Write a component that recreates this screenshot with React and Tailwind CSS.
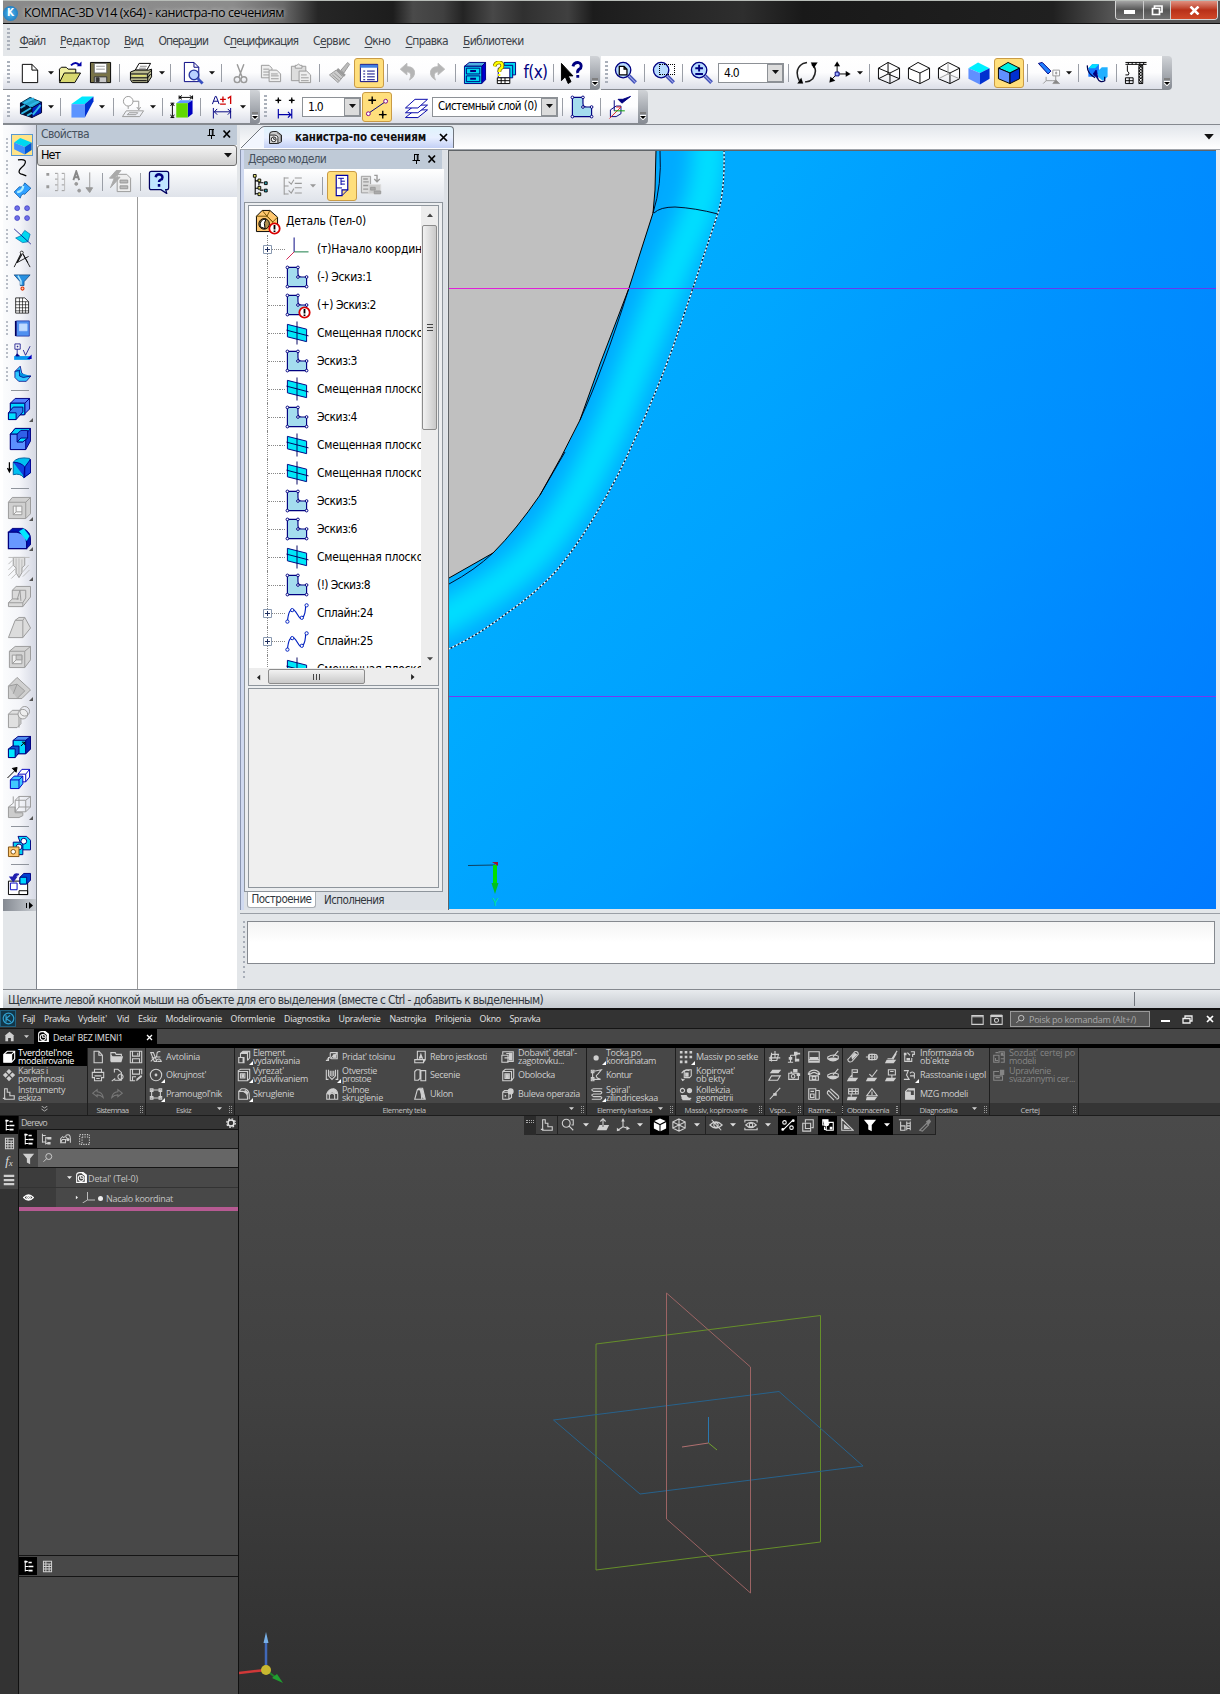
import React, { useLayoutEffect, useRef, useState } from "react";

/* ---------- helpers ---------- */

function T({ w, className = "", children }) {
  const ref = useRef(null);
  const [ls, setLs] = useState(null);
  useLayoutEffect(() => {
    if (!w || ls !== null) return;
    const el = ref.current;
    const n = el.textContent.length;
    setLs((w - el.getBoundingClientRect().width) / n);
  }, [w, ls]);
  return (
    <span ref={ref} className={"inline-block shrink-0 whitespace-nowrap " + className} style={ls === null ? undefined : { letterSpacing: ls + "px" }}>
      {children}
    </span>
  );
}

function Strip({ x0 = 0, items, className = "" }) {
  let p = x0;
  return (
    <div className={"flex " + className}>
      {items.map(([x, w, n], i) => {
        const m = x - p;
        p = x + w;
        return (
          <div key={i} className="flex h-full shrink-0 items-center justify-center" style={{ marginLeft: m, width: w }}>
            {n}
          </div>
        );
      })}
    </div>
  );
}

const N = "#000080";
const B = "#0000a8";
const G = "#9a9a9a";
const circ = (x, y, r) => `M${x - r} ${y}a${r} ${r} 0 1 0 ${2 * r} 0a${r} ${r} 0 1 0 ${-2 * r} 0z`;

/* each icon is a list of [path, stroke, fill, stroke width] */
const ICONS = {
  new: [["M4 3H14L20 9V22H4z", "#000", "#fff"], ["M14 3V9H20", "#000", "none"]],
  open: [["M1 21V8L3 6H8L10 8H18V12", "#000", "#f0f0a0"], ["M1 22L6 12H23L17 22z", "#000", "#d8d870"], ["M13 4Q18 -1 22 4", B, "none", 2], ["M19 5H24V0z", B, B, 0]],
  save: [["M1 1H22V22H1z", "#000", "#7a7448"], ["M5 2H18V12H5z", "#666", "#fff"], ["M7 5H16M7 8H16", "#999", "none"], ["M5 16H18V22H5z", "#333", "#c8c8c8"], ["M7 17H10V21H7z", "#333", "#333"]],
  print: [["M6 9L10 2H22L18 9z", "#000", "#fff"], ["M11 5H18M10 7H17", "#888", "none"], ["M1 11L6 9H20L23 8V16L19 22H3L1 19z", "#000", "#b8b890"], ["M1 13H19L23 9M1 17H19L22 13M3 20H18M19 13V22", "#000", "none"], ["M3 15H17", "#ffff60", "none"]],
  preview: [["M3 1H13L18 6V21H3z", N, "#fff"], ["M13 1V6H18", N, "none"], [circ(13, 14, 5), "#2838a0", "#b8d0ff", 1.4], ["M17 18L22 23", "#3850c0", "none", 3]],
  cut: [["M8 3L13 16M15 3L10 16", G, "none", 1.5], [circ(8, 19, 3), G, "none", 1.5], [circ(15, 19, 3), G, "none", 1.5]],
  copy: [["M2 4H10L13 7V17H2z", G, "#eee"], ["M4 8H10M4 11H10M4 14H10", G, "none"], ["M10 9H18L22 13V21H10z", G, "#eee"], ["M12 13H19M12 15H20M12 18H20", G, "none"]],
  paste: [["M2 5H17V20H2z", G, "#ddd"], ["M6 7V4H8Q9 1 11 4H13V7z", G, "#eee"], ["M10 10H18L22 14V22H10z", G, "#eee"], ["M12 14H18M12 17H20M12 20H20", G, "none"]],
  brush: [["M13 9L20 1L22 3L16 12z", G, "#bbb"], ["M9 8L17 15", G, "none", 3], ["M8 9L1 14L10 22L15 16z", G, "#ccc"], ["M4 14L11 20M6 12L13 18", G, "none"]],
  list: [["M3 3H21V21H3z", N, "#fff"], ["M3 5H21", "#4080e0", "none", 3], ["M6 10H8M6 13H8M6 16H8M10 10H18M10 13H18M10 16H18M6 19H8M10 19H18", N, "none"]],
  undo: [["M1 8L9 1V5Q19 5 18 14Q17 18 12 21Q16 12 9 11V15z", "#bbb", "#b5b5b5"]],
  redo: [["M23 8L15 1V5Q5 5 6 14Q7 18 12 21Q8 12 15 11V15z", "#bbb", "#b5b5b5"]],
  cabinet: [["M1 5L6 1H23L19 5z", N, "#50b0e0"], ["M19 5L23 1V19L19 23z", N, "#0000d0"], ["M1 5H19V23H1z", N, "#00d8f0"], ["M3 7H17V13H3zM3 15H17V21H3z", N, "none"], ["M7 10H13M7 18H13", N, "none", 2]],
  qsq: [["M11 1H23V14H11z", N, "#00d8f0"], ["M8 4H20V17H8z", N, "#00d8f0"], ["M5 7H17V17H5z", N, "#fff"], ["M4 17H17V23H4zM4 20H17M8 17V23M12 17V23", "#000", "#fff"], ["M1 5Q2 1 6 1T9 6Q6 8 6 11", "#807000", "none", 4], ["M1 5Q2 1 6 1T9 6Q6 8 6 11M6 13V15", "#ffff00", "none", 2.4]],
  curhelp: [["M1 2V20L5 16L8 23L11 21L8 15H13z", "#000", "#000"], ["M13 5Q14 1 18 1Q23 2 21 7Q17 9 18 12M18 14V17", N, "none", 3]],
  zpage: [[circ(9, 9, 8), N, "#b8dcff", 1.4], ["M5 5H10L13 8V14H5zM10 5V8H13", "#000", "#fff", 1.3], ["M15 15L22 22", "#4050b8", "none", 4], ["M15 15L22 22", "#a0a8e8", "none", 1.2]],
  zsel: [[circ(9, 9, 8), N, "#b8dcff", 1.4], ["M15 15L22 22", "#4050b8", "none", 4], ["M15 15L22 22", "#a0a8e8", "none", 1.2]],
  zpm: [[circ(9, 9, 8), N, "#b8dcff", 1.4], ["M9 3.500V10.500M5 7H13M5 13H13", N, "none", 2], ["M15 15L22 22", "#4050b8", "none", 4], ["M15 15L22 22", "#a0a8e8", "none", 1.2]],
  rot: [["M8 2Q-2 8 4 20M10 21Q14 22 18 18Q24 8 17 3M8 2L12 1", "#222", "none", 1.6], ["M16 1H23L19 7zM2 23H8L6 17z", "#000", "#000", 0.1]],
  axes: [["M9 13V3M9 13H20M9 13L2 20", "#000", "none"], ["M6 5L9 0L12 5zM18 10L23 13L18 16zM1 22L2 16L7 20z", "#000", "#000", 0.1], ["M7 11H11V15H7z", N, "#a0b0ff"]],
  cube1: [["M1 7L11 1L23 7V18L13 23L1 18zM1 7L13 12L23 7M13 12V23M11 1V13M1 18L11 13L23 18", "#000", "none"]],
  cube2: [["M1 7L11 1L23 7V18L13 23L1 18zM1 7L13 12L23 7M13 12V23", "#000", "#fff"]],
  cube3: [["M1 7L11 1L23 7V18L13 23L1 18zM1 7L13 12L23 7M13 12V23", "#000", "none"], ["M11 1V13M1 18L11 13L23 18", G, "none"]],
  cube4: [["M1 7L11 1L23 7L13 12z", "none", "#00f0ff"], ["M1 7L13 12V24L1 18z", "none", "#6090ff"], ["M13 12L23 7V18L13 24z", "none", "#0030d0"]],
  slab: [["M1 8L9 2L24 8L15 14z", "none", "#00d8f0"], ["M1 8L15 14V24L1 17z", "none", "#4090ff"], ["M15 14L24 8V18L15 24z", "none", "#0058d8"]],
  cube5: [["M1 7L11 1L23 7L13 12z", "#000", "#00f0e0"], ["M1 7L13 12V23L1 18z", "#000", "#6090ff"], ["M13 12L23 7V18L13 23z", "#000", "#0030d0"]],
  cam: [["M1 2L5 1L14 10L11 13z", N, "#2080ff"], ["M16 9H23V15H16zM19 11H20V13H19zM19 15V20M9 16V20H16L19 20M9 20L6 23", G, "none"], ["M16 23L19 19L23 23z", G, "#888"]],
  pair: [["M2 7L6 3H13V12L9 16H2z", "none", "#1878ff"], ["M12 10L16 6H22V16L17 20L12 16z", "none", "#20b0ff"], ["M2 7L6 3H13L9 7z", "none", "#00e0ff"], ["M1 4Q0 12 9 17M11 17Q14 23 19 20V16", "#000050", "none", 1.3], ["M7 13L12 18L10 9z", "#000080", "#000080"]],
  crane: [["M1 1H23M1 3H23M4 1V3M8 1V3M12 1V3M16 1V3M20 1V3M3 4V10Q6 12 4 14H1M1 17H9V23H1zM5 17V23M1 20H9", "#000", "none"], ["M15 4H19V23H15z", "#000", "#fff"], ["M15 4L19 7L15 10L19 13L15 16L19 19L15 23M19 4L15 7L19 10L15 13L19 16L15 19L19 23", "#000", "none"]],
  stripe: [["M1 8L11 2L23 7L13 13z", "#003050", "#20a0c8"], ["M1 8L13 13V23L1 19z", "#000030", "#001830"], ["M13 13L23 7V18L13 23z", "#000030", "#0020c0"], ["M1 13L6 10M2 19L12 13M8 21L13 18M5 8L15 3M10 11L20 6M14 20L22 10", "#30b8e8", "none", 2]],
  solid: [["M1 9L12 1H24L15 9z", "none", "#00e8ff"], ["M1 9H15V23H1z", "none", "#5c94ff"], ["M15 9L24 1V6L15 23z", "none", "#0030d0"]],
  extr: [[circ(7, 6, 5), G, "none"], ["M12 6H18V14M16 12L18 15L20 12M7 11V14M5 16H23L19 22H1zM8 18H17L15 20H6z", G, "none"]],
  green: [["M6 8L10 5H23L18 8z", "none", "#6098ff"], ["M18 8L23 5V19L18 23z", "none", "#0000c0"], ["M6 8H18V23H6z", "none", "#60d800"], ["M2 9V22M0 8H4M0 23H4M0 11L2 8L4 11M0 20L2 23L4 20M9 2H22M9 0V4M23 0V4M12 0L9 2L12 4M20 0L23 2L20 4", "#000", "none"]],
  apm: [["M2 9L5 1H6L9 9M3 6H8M3 13V24M21 13V24M4 17H21M7 14L4 17L7 20M18 14L21 17L18 20", N, "none"], ["M10 4H16M13 1V7M10 9H16M18 3L21 1V9", "#d00000", "none", 1.4]],
  stars: [["M4 2V8M1 5H7M18 2V8M15 5H21M3 4L5 6M5 4L3 6M17 4L19 6M19 4L17 6", "#000", "none", 1.3], ["M4 14V24M18 14V24M4 20H17M14 17L17 20L14 23", B, "none", 1.2]],
  snap: [["M4 18L20 7", N, "none"], [circ(3, 19, 2), "#800080", "#fff"], [circ(21, 6, 2), "#800080", "#fff"], ["M7 1V9M3 5H11M18 16V24M14 20H22M6 4L8 6M8 4L6 6M17 19L19 21M19 19L17 21", "#000", "none", 1.4]],
  layers: [["M1 23L11 15H24L14 23z", B, "#fff"], ["M1 18L11 10H24L14 18z", B, "#fff"], ["M1 13L11 4H24L14 13z", B, "#fff"]],
  sketch: [["M2 2H13V8Q13 12 17 12H22V22H2z", N, "#a4dcee", 1.2], [circ(2, 2, 1.4), N, "#fff"], [circ(13, 2, 1.4), N, "#fff"], [circ(13, 12, 1.4), N, "#fff"], [circ(22, 12, 1.4), N, "#fff"], [circ(2, 22, 1.4), N, "#fff"], [circ(22, 22, 1.4), N, "#fff"]],
  acheck: [["M2 15L8 11H13V19L8 22H2z", N, "none"], ["M1 24L13 12H8", "#e02020", "none"], ["M6 16H17", "#00a000", "none"], ["M6 5V16", N, "none"], ["M10 4L14 8L23 1L15 4z", N, N]],
  plane: [["M2 3L22 8V21L2 16z", N, "#00e8f8"], ["M1 9L24 15M12 0V24", "#000060", "none"]],
  spline: [["M2 21C3 11 5 7 9 9C13 12 14 20 18 17Q21 13 21 4", "#0020c0", "none", 1.2], [circ(2, 21, 1.7), "#0020c0", "#fff"], [circ(7, 9, 1.7), "#0020c0", "#fff"], [circ(17, 17, 1.7), "#0020c0", "#fff"], [circ(22, 4, 1.7), "#0020c0", "#fff"]],
  origin: [["M9 15V0", "#000080", "none"], ["M9 15H24", "#107840", "none"], ["M9 15L1 23", "#d02050", "none"]],
  detail: [["M1 7L7 1H15L23 8V18L18 23H1z", "#000", "#ffc870"], ["M1 7H12L18 13V23M7 1L12 7L15 1M12 7L18 13L23 8", "#705000", "none"], [circ(9, 15, 5.5), "#000", "#b09050"], ["M5 18Q4 10 11 10Q8 14 10 20z", "#000", "#fff"]],
  tree: [["M3 3V22M3 7H7M7 8V12M7 9H12M3 15H7M3 21H7M8 17H12", "#000", "none", 1.2], ["M1 0H4V3H1zM6 5H9V8H6zM6 13H9V16H6zM6 20H9V23H6z", "#000", "#e8e870"], ["M13 8H16V11H13zM13 16H16V19H13z", "#000", "#30a0b0"]],
  checks: [["M2 2V22M2 3H7M2 12H7M2 21H7M14 3H22M14 9H22M14 14H22M14 20H22M7 7L10 10L13 5M7 17L10 20L13 15", G, "none", 1.2]],
  page: [["M6 1H18V16H12V22H6z", B, "#fff", 1.2], ["M12 22L18 16", B, "none"], ["M8 4H11V11M11 7H15M11 10H15M11 4H14M6 14H12", B, "none"]],
  pages: [["M1 2H11V20H1z", G, "#ddd"], ["M3 5H8M3 8H9M3 12H9M3 16H9M15 1H18V7M15 5L18 8L21 5", G, "none", 1.5], ["M9 11H22V21H9z", "#ddd", "#ccc"], ["M11 14H16V17H11zM15 18H22V21H15z", G, "#aaa"]],
  cat: [["M3 4H6M3 17H6", G, "none", 3], ["M12 3H15M12 9H15M12 15H15M12 21H15M19 3H22M19 9H22M19 15H22M19 21H22", G, "none", 1], ["M15 3V21M22 3V21", "#bbb", "none", 1]],
  az: [["M2 10L5 1L8 10M3 7H8", "#888", "none", 2], ["M19 2V22M15 18L19 23L22 18z", "#999", "#999"], [circ(5, 14, 1.5), G, G], [circ(8, 21, 1.5), G, G]],
  bolt: [["M8 4H18L22 8V22H8z", "#999", "#eee"], ["M11 10H19V13H11zM11 16H19V19H11z", "#999", "#bbb"], ["M7 0L0 8H5L1 18L11 7H6L12 0z", "#aaa", "#aaa"]],
  help: [["M3 1H19Q21 1 21 3V18Q21 20 19 20H18L19 24L13 20H3Q1 20 1 18V3Q1 1 3 1z", "#000060", "#c0e4ff", 1.3], ["M7.500 7Q8 4 11 4Q16 5 14 9Q11 10 11 12M11 14V17", N, "none", 2.6]],
  docpart: [["M2 7Q2 2 8 2H14L22 8V19L16 22H2z", "#111", "#ccc", 1.5], ["M2 8H11Q17 9 16 14V22", "#111", "#eee", 1.5], [circ(9, 15, 4), "#111", "#fff", 1.5], ["M9 12V15H12", "#111", "none", 1.5], ["M14 4L20 8V18", "#555", "none"]],
  curve: [["M6 2Q20 0 14 9Q2 19 12 21L17 23", "#000", "none", 1.6]],
  surf: [["M1 14L8 7Q12 9 15 2L23 9L15 17Q11 15 9 22z", "#0050a0", "#30a0ff"], ["M5 14Q12 14 13 6", "#b0f0ff", "none", 3]],
  dots: [[circ(5, 5, 3.2), "#3838c0", "#7070e8"], [circ(18, 5, 3.2), "#3838c0", "#7070e8"], [circ(5, 18, 3.2), "#3838c0", "#7070e8"], [circ(18, 18, 3.2), "#3838c0", "#7070e8"]],
  wing: [["M3 14L10 11L15 4L22 9L19 19L12 20z", "#0070b0", "#00d8f0"], ["M1 2L23 22", N, "none"]],
  compass: [["M10 4L1 22M11 4L5 16L20 8M12 4L22 22M11 6L5 16M13 5L19 16", "#000", "none", 1.1], [circ(11, 3, 2), "#000", "#fff"]],
  funnel: [["M1 2H22L14 11V16H9V11z", "#104880", "#2890e0"], ["M6 3L10 10V15", "#b0e8ff", "none", 2], [circ(12, 20, 2), "#e03000", "#ffd0b0", 1.4]],
  grid: [["M3 2H15L20 7V22H3z", "#000", "#fff"], ["M3 7H20M3 11H20M3 15H20M3 19H20M8 2V22M12 2V22M16 7V22", "#000", "none", 0.8]],
  book: [["M4 2H21V22H4z", "#2030a0", "#5090f0"], ["M8 6H18V15H8z", "#c0d8ff", "#c0dcff"], ["M3 2V22", "#000060", "none", 2]],
  rough: [["M2 2H9V9H2zM5 5H6V6H5zM5 9V17M13 10L16 17L22 5", N, "none"], ["M1 18H22V23H1z", "none", "#0898f0"], ["M3 18L5 15L8 18z", N, N], ["M18 22L24 16V22z", "none", "#0000c0"]],
  elbow: [["M2 8L9 1L11 10L16 14H23L17 21H7L2 16z", N, "#30c8ff"], ["M2 8L8 6V14L13 16L23 14", N, "#0090e0"]],
  boss: [["M3 6L8 1H23V12L17 18H3z", N, "#5080ff"], ["M3 6H18L23 1M18 6V18", N, "none"], ["M3 6H18V18H3z", N, "#00d8ff"], ["M1 16L6 10H16V15L9 23H1z", N, "#3080f0"], ["M1 16H9V23H1z", N, "#00e0ff"]],
  cutx: [["M3 7L8 1H24V14L19 23H3z", N, "#1838d8"], ["M3 7L8 1H24L19 7z", N, "#00d0f8"], ["M3 7H19V23H3z", N, "#5c90ff"], ["M10 7L14 3H21V11L16 15H10z", N, "#3060e8"], ["M10 15L14 11H21L16 15z", N, "#00e0ff"]],
  sweep: [["M6 6Q10 0 23 2L24 17L17 22Q13 17 6 19z", "#0060a0", "#00c0f0"], ["M6 6Q14 6 18 11V22M18 11L24 3V17L17 22z", "#000090", "#1040e0"], ["M2 6V15M0 12L2 16L4 12", "#000", "none", 1.3]],
  frame: [["M1 6L5 1H24V18L19 23H1z", G, "#d0d0d0"], ["M1 6H19V23M19 6L24 1", G, "none"], ["M6 10H15V19H6z", G, "#f6f6f6"], ["M6 19L9 16V10M9 16H15", G, "none"]],
  fillet: [["M1 6L5 2H16Q24 5 24 13V19L20 23H1z", N, "#0010b0"], ["M1 6H10Q20 8 20 17V23H1z", N, "#6898ff", 1.3], ["M12 5L17 2L23 10L20 15z", "none", "#00e8ff"]],
  hole: [["M6 1H18V9L15 12V17L12 22L9 17V12L6 9z", G, "#e0e0e0"], ["M1 1H23M9 2V18M12 2V20M15 3V17M1 8L5 4M1 14L7 8M1 20L8 13M4 23L9 18M16 21L23 14M16 16L22 9", "#bbb", "none"]],
  rib: [["M5 5L9 1H24V12L16 22H1V18L5 14z", G, "#dadada"], ["M1 18H16V22M5 5H19V13L16 18M10 15L13 5L14 16M5 14H12", G, "none"]],
  draft: [["M1 22L8 4L12 1H18L24 12L16 22z", G, "#dcdcdc"], ["M8 4H16L16 22M16 4L18 1", G, "none"]],
  shell: [["M2 6L8 1H24V15L18 23H2z", G, "#d4d4d4"], ["M2 6H18V23M18 6L24 1", G, "none"], ["M5 10H15V19H5z", G, "#eee"], ["M5 19L9 15H15V10H9V15", G, "#c8c8c8"]],
  sect: [["M1 10L10 1L24 14L15 23H1z", G, "#d0d0d0"], ["M1 10L10 8L18 15L10 23M6 18L10 8", G, "#c0c0c0"]],
  bool: [["M1 8L5 4H14V18L10 22H1zM1 8H12V22", G, "#e0e0e0"], [circ(16, 8, 5), G, "#eee"], [circ(18, 5, 5), G, "none"]],
  scale: [["M6 5L11 1H24V14L19 19H6z", N, "#5090f0"], ["M6 5H19V19H6z", N, "#00d8ff"], ["M19 5L24 1V14L19 19z", N, "#0020b0"], ["M1 14L5 11H12V18L8 23H1z", N, "#1050d0"], ["M1 14H8V23H1z", N, "#00e8ff"], ["M14 11L18 7M15 7H18V10", "#000", "none"]],
  copyb: [["M11 8L15 3H23V11L19 16H11zM11 8H19V16M19 8L23 3", "#0000c0", "#fff"], ["M3 14L7 10H16V18L12 23H3z", "#0000c0", "#40c8ff"], ["M3 14H12V23M12 14L16 10", "#0000c0", "none"], ["M0 12L9 3M5 2L10 1L9 6z", "#000", "#000"]],
  inter: [["M1 12L6 8V1", G, "none"], ["M1 12H8V18H16V21L12 23H1z", G, "#ccc"], ["M8 5L12 1H24V12L19 17H8zM8 5H19V17M19 5L24 1M12 1V12H24M8 17L12 12", G, "none"]],
  coll: [["M11 2H20L24 6V16H16z", N, "#00e0ff"], ["M6 8H16V21H6z", N, "#00d0f0"], [circ(17, 7, 3), N, "#fff"], [circ(12, 13, 3), N, "#fff"], ["M1 13H12V23H1z", "#805010", "#ffc870"], [circ(6, 18, 2.4), "#805010", "#fff"]],
  draw: [["M1 9H21V23H1zM12 19H21V23H12z", "#000", "#fff"], ["M3 11H10V18H3z", "#0000c0", "none"], ["M13 5L17 1H24V8L20 12H13z", N, "#0040d0"], ["M13 5H20V12H13z", N, "#00d8ff"], ["M12 2Q6 0 6 7M3 5L6 9L9 5z", "#2020b0", "#2020b0", 1.6]],
};

const Ico = ({ n, s = 24 }) => (
  <svg width={s} height={s} viewBox="-0.5 -0.5 25 25" className="shrink-0">
    {ICONS[n].map(([d, st, f, sw = 1], i) => (
      <path key={i} d={d} stroke={st} fill={f} strokeWidth={sw} />
    ))}
  </svg>
);

/* monochrome icons on a 16 unit grid: [outline path, filled path] */
const D = {
  cubeS: ["M2 5L6 1.5H14.5V10L11 14H2zM2 5H11V14M11 5L14.5 1.5", "M2 5H11V14H2z"],
  diam: ["", "M8 1L11 4L8 7L5 4zM4 5L7 8L4 11L1 8zM12 5L15 8L12 11L9 8zM8 9L11 12L8 15L5 12z"],
  skt: ["M3 2V14H14V10H9V6H6V2zM1 13H4", ""],
  newd: ["M3.5 1.5H9L13 6V14.5H3.5zM9 1.5V6H13", ""],
  opend: ["M1 13V3H6L7 5H13V7", "M3 7H15L13 14H1V5z"],
  saved: ["M1.5 1.5H14.5V14.5H1.5zM4 2V7H12V2M4 14V10H12V14M10 3V6", ""],
  printd: ["M4 5V1.5H12V5M1.5 5H14.5V11H12V14.5H4V11H1.5zM4 9H12M6 12H10", ""],
  prevd: ["M5 14H13V5L9 1.5H5V5M9 10A3 3 0 1 0 9 9.9M6 12L2 15", ""],
  savep: ["M14.5 7V1.5H1.5V14.5H7M4 2V7H12V2M4 14V10H8M9 14L14 9", "M8 15L9 12L14 8L15 10z"],
  undod: ["M2 7L7 3V5.5Q13 6 14 12Q11 9 7 9V11z", ""],
  redod: ["M14 7L9 3V5.5Q3 6 2 12Q5 9 9 9V11z", ""],
  auto: ["M2 3H5L9 13H6zM3 9H6Q9 9 9 5T13 2M9 8H13M9 11Q13 9 14 13H10M2 13L6 9", ""],
  circle: [circ(8, 8, 6.5), circ(8, 8, 1.6)],
  rect: ["M3 3.5H13V12.5H3zM1.5 2H4.5V5H1.5zM11.5 2H14.5V5H11.5zM1.5 11H4.5V14H1.5zM11.5 11H14.5V14H11.5z", ""],
  ext: ["M4 4L7 1.5H14.5V9L12 12M4 8V4H12V12M2 8.5H8V14.5H2zM7 8V14", "M4 4L7 1.5H14L12 4z"],
  cutd: ["M1.5 3L4 1.5H14.5V12L12 14.5H1.5zM1.5 4H12V14M4 6.5H9V11.5H4z", "M5 7H8V11H5z"],
  fil: ["M2 5L5 2H9Q14 4 14 9V14M2 5H7Q12 6 12 12V14H2z", "M9 3L13 6L12 9L8 6z"],
  thick: ["M6 3H14V10H7M2 11L6 8V3M1 12H4V8M6 10Q10 5 14 4", "M9 5H13V9H9z"],
  hold: ["M1.5 2V13H4M14.5 2V13H12M4 2V9L8 13L12 9V2M6 3V9M8 3V10M10 3V9", ""],
  full: ["M2 14V8Q4 2 10 2Q14 3 14.5 8V14zM5 14V9Q8 5 11 9V14", "M2 8Q4 2 10 2Q14 3 14 8H11Q8 4 5 9z"],
  ribd: ["M5 1.5H14V11H5zM2 11H12V14.5H2zM9 4V10M7 10L9 5L11 10M14 11L12 14", ""],
  sec: ["M2 4L4 2H8V12L6 14H2zM9 3H14.5V14.5H9z", ""],
  ukl: ["M2 14L5 3L7 1.5H11L14 14zM5 3H9L10 14", "M7 2H11L14 14L11 13z"],
  addd: ["M2 5V2H14V13H7M1 6H8V14H1zM4 9H12V4H6", "M9 3H13V12H9z"],
  shelld: ["M2 4L5 1.5H14.5V11L12 14.5H2zM2 4H12V14M4.5 6.5H9.5V12H4.5z", "M5 7H9V11.5H5z"],
  boold: ["M2 6H9V14H2zM2 6L4 4H8M12 8V12L9 14", circ(11, 5, 3.5) + circ(5, 10, 1)],
  dot: ["", circ(7, 9, 3)],
  kont: ["M3 4L13 2L9 7Q4 10 12 13H3zM1.5 2.5H4.5V5.5H1.5zM1.5 11H4.5V14.5H1.5z", ""],
  spir: ["M14 2H4Q0 3 4 5H12Q15 6 12 8H4Q0 9 4 11H12Q15 12 12 14H2", ""],
  grd: ["", "M1 1H4V4H1zM6.5 1H9.5V4H6.5zM12 1H15V4H12zM1 6.5H4V9.5H1zM6.5 6.5H9.5V9.5H6.5zM12 6.5H15V9.5H12zM1 12H4V15H1zM6.5 12H9.5V15H6.5z"],
  cpy: ["M3 6Q6 1 12 3M6 4L8 2H14V9L12 11H6z", "M7 5H11V10H7zM2 12L7 13L4 15z"],
  colg: [circ(4, 4, 2.4) + "M3 13H14M3 10H9", circ(12, 4, 3) + "M2 9H8L14 15H4z"],
  pl: ["M4 3V13M1 9H14M4 5H12L10 12H2zM8 1V9", ""],
  net: ["M4 6V14M1 14H7M4 6H10M10 4V13", "M8 2H12V6H8zM12 3H15V5H12zM2 8H6V11H2zM9 10H14V13H9z"],
  pls: ["M4 9H14L11 14H1zM5 3H14", "M5 2H15L12 6H2z"],
  camd: ["M2 6H13V13H2z" + circ(7, 9.5, 2), "M7 1H12V5H7zM11 6H15V9H11zM4 4H6V6H4z"],
  lin: ["M2 14L14 1", "M6 7H10V10H6z"],
  dimd: ["M2 2H14V14H2zM2 11H14M2 13H14", "M3 8H13V11H3z"],
  dim2: ["M2 5Q8 0 14 5M4 7Q8 3 12 7M3 14V9H13V14zM6 10H10V13H6z", "M1 5H4V8H1zM12 5H15V8H12z"],
  disk: ["M2 10Q8 15 14 10V7Q8 4 2 8zM8 8L14 1", "M2 10Q8 15 14 10Q8 7 2 10z"],
  lst: ["M2 2H10V14H2zM10 4H14V14M4 5H8M4 8H8V12H4zM6 14H14", ""],
  clip: ["M3 4L12 13M1 7L9 15M5 2L14 10M3 4Q0 6 3 9M14 10Q16 13 12 14", ""],
  pill: ["M3 10L10 2Q14 1 14 5L7 13Q3 15 2 11z", "M6 7L10 3L13 5L7 11z"],
  bar: ["M1 8H15M4 5V11M5 5H11V11H5zM11 5Q14 5 14 8T11 11M8 4V12", ""],
  slp: ["M15 1L9 10H4M14 4L10 11", "M3 11H14L11 15H1z"],
  slp2: ["M7 11V2H13V5H8M4 11L7 8", "M3 11H14L11 15H1z"],
  slp3: ["M14 2L8 10L5 7", "M3 11H14L11 15H1z"],
  slp4: ["M5 2H13V8H5zM9 8V12M7 4H11", "M3 11H14L11 15H1z"],
  slp5: ["M3 2H14V8H3zM7 2V8M11 2V8M3 5H14M6 8V11", "M2 11H13L11 15H1z"],
  slp6: ["M8 2L14 10H2zM8 5V9", "M2 11H14L11 15H1z"],
  inf: ["M2 4V13H10V9M9 2H13V5H11V8M5 3L8 6", "M4 9H8V12H4zM1 3H4V6H1z"],
  ang: ["M1 3H6L4 8L7 13H1M8 6Q11 3 13 6V12M8 9H13", ""],
  mzg: ["M3 5L6 2H13V14H3z", "M3 5H9V9H13V14H3zM6 2H13V4H6z"],
  cer: ["M2 6H8V14H2zM8 4V2H14V14H10M4 3H7M10 6H14M10 10H14M4 9V12H7", "M10 3H13V6H10z"],
  cer2: ["M6 14H2V4H8M2 9H12V14H6M4 11H9", "M9 2H14V8H9z"],
  treed: ["M4 1V14M4 2H7M4 8H8M4 13H8", "M8 2H12V4H8zM8 7H14V9H8zM8 12H13V14H8zM3 1H6V3H3z"],
  treed2: ["M3 1V12M3 3H7M3 11H8M7 6H10M7 5V14M7 13H11", "M9 5H14V8H9zM9 11H13V14H9z"],
  stack: ["M2 11V7L5 4M2 12H8V8H4zM8 3Q14 0 14 7V12M5 6Q9 3 10 7", circ(11, 8, 2)],
  dsh: ["M2 2H14V14H2zM5 5H14M5 5V14", ""],
  table: ["M3 1.5H13V14.5H3zM3 5H13M3 8H13M3 11H13M6 2V14M10 5V14", ""],
  lines: ["", "M1 1H15V4H1zM1 6.5H15V9.5H1zM1 12H15V15H1z"],
  funl: ["", "M1 2H15L10 8V15L6 13V8z"],
  mag: [circ(9, 6, 4) + "M6 9L2 13", ""],
  eye: ["M1 8Q8 0 15 8Q8 16 1 8z" + circ(8, 8, 2.5), circ(8, 8, 1)],
  eyex: ["M1 8Q8 1 15 8Q8 15 1 8zM3 2L14 14" + circ(8, 8, 2.5), ""],
  det: ["M2 5Q2 2 6 2H10L14 5V14H2z" + circ(7.5, 9, 3.5) + "M7 6.5V9H10", "M10 2L14 5V14H12V6L8 3z"],
  home: ["", "M8 1L15 7H14V15H10V10H6V15H2V7H1z"],
  zoomd: [circ(6, 6, 4.5) + "M9 9L14 14M11 2H14V8H12", ""],
  pln: ["M8 10V1M5 4L8 1L11 4", "M4 8H7V10H9V8H15L12 14H1z"],
  axd: ["M8 10V2M8 10L2 14M8 10L14 12", "M6 4L8 0L10 4zM1 15V11L5 14zM12 9L16 12L12 14z"],
  cubeF: ["", "M8 .5L14.5 3.5L8 6.8L1.5 3.5zM1 4.8L7.4 8V15L1 12zM15 4.8L8.6 8V15L15 12z"],
  cubeW: ["M8 1L15 4.5V11.5L8 15L1 11.5V4.5zM1 4.5L8 8L15 4.5M8 8V15M8 1V8L1 11.5M8 8L15 11.5", ""],
  pic: ["M1 5V2.500H15V5M1 11V13.500H15V11M2 8Q8 2 14 8Q8 14 2 8z" + circ(8, 8, 2), ""],
  pts: ["M3 13L13 3" + circ(4, 5, 2) + circ(12, 11, 2), circ(14, 3, 1.6) + circ(2, 13, 1.6)],
  boxes: ["M2 6H11V15H2zM5 5V2H14V11H12M5 6V12H11", ""],
  pages: ["M2 2H8V8H2zM6 5H14V14H6zM4 10V13H6", "M2 2H8V6H10L8 9H4zM10 10H13V13H10z"],
  tri: ["M2 1L15 14H2zM5 8L10 12H5z", "M5 8L9 12H5z"],
  door: ["M1 2H15M10 14V4M3 4V14H8V9H3M14 4V14M10 6H14M10 9H14M10 12H14", ""],
  pick: ["M2 14L10 6L12 8L5 15z", "M9 4L13 1L15 4L12 8z"],
  rectw: ["M1 3H15V14H1zM1 4.5H15", ""],
  gearw: ["M1 3H15V14H1z" + circ(8, 9, 2.5), "M1 2H15V5H1z"],
};

const DI = ({ n, s = 13, c = "text-[#cfcfcf]" }) => (
  <svg width={s} height={s} viewBox="0 0 16 16" className={"shrink-0 " + c}>
    <path d={D[n][0]} stroke="currentColor" fill="none" strokeWidth={n === "eye" ? 1.8 : 1.25} strokeDasharray={n === "dsh" ? "1.5 1.5" : undefined} />
    {D[n][1] && <path d={D[n][1]} fill="currentColor" />}
  </svg>
);

const Down = ({ c = "#111", s = 6 }) => (
  <svg width={s} height={s / 2 + 1} viewBox="0 0 8 5" className="shrink-0"><path d="M0 0H8L4 4.5z" fill={c} /></svg>
);
const Sep = () => <div className="h-[18px] w-px bg-[#9a9ea6]" />;
const Grip = () => <div className="h-6 w-[3px] bg-[repeating-linear-gradient(to_bottom,#aab0ba_0_2px,transparent_2px_4px)]" />;
const Hot = ({ n }) => (
  <div className="flex h-[30px] w-[30px] items-center justify-center rounded-[3px] border border-[#c99b45] bg-[#ffdf7c]">
    <Ico n={n} />
  </div>
);
const Cap = () => (
  <div className="flex h-[34px] w-[10px] items-end justify-center rounded-r-[4px] bg-gradient-to-b from-[#d0d3d7] to-[#858a92] pb-1">
    <svg width="6" height="8" viewBox="0 0 6 8"><path d="M0 1H6M0 4H6L3 7z" stroke="#fff" strokeWidth="2" fill="#fff" /><path d="M0 1H6" stroke="#000" /><path d="M0 4H6L3 7z" fill="#000" /></svg>
  </div>
);
const Combo = ({ children }) => (
  <div className="flex h-5 w-full items-center justify-between border border-[#8d9196] bg-white pl-[5px] text-[12px] text-black">
    {children}
    <div className="flex h-[18px] w-4 items-center justify-center border border-[#8d9196] bg-[#dcdcdc]"><Down s={7} /></div>
  </div>
);

const ci = (x, n, w = 24) => [x - w / 2, w, <Ico n={n} />];
const dn = (x) => [x - 3, 6, <Down />];
const sp = (x) => [x, 1, <Sep />];

const ROW1A = [
  [7, 3, <Grip />], ci(30, "new"), dn(51), ci(70, "open"), ci(101, "save"), sp(119), ci(141, "print"), dn(162), sp(170),
  ci(193, "preview"), dn(212), sp(221), ci(241, "cut"), ci(271, "copy"), ci(301, "paste"), sp(319), ci(340, "brush"),
  [354, 30, <Hot n="list" />], sp(387), [399, 21, <Ico n="undo" s={21} />], [425, 21, <Ico n="redo" s={21} />], sp(455),
  ci(475, "cabinet"), ci(505, "qsq"),
  [523, 25, <T w={24} className="font-['DejaVu_Sans_Condensed'] text-[17px] leading-none text-[#000080]">f(x)</T>], sp(553), ci(572, "curhelp"),
];
const ROW1B = [
  [605, 3, <Grip />], ci(626, "zpage"), sp(644),
  [652, 24, <div className="relative h-6 w-6"><Ico n="zsel" /><div className="absolute left-[7px] top-[3px] h-[11px] w-[16px] border border-dotted border-black" /></div>],
  sp(682), ci(702, "zpm"), [718, 66, <Combo><T w={15}>4.0</T></Combo>], sp(788), ci(807, "rot"), ci(840, "axes"), dn(860), sp(869),
  ci(889, "cube1"), ci(919, "cube2"), ci(949, "cube3"), ci(979, "cube4"), [994, 30, <Hot n="cube5" />], sp(1027), ci(1049, "cam"), dn(1069),
  sp(1078), ci(1098, "pair"), sp(1116), ci(1136, "crane"),
];
const ROW2A = [
  [7, 3, <Grip />], ci(31, "stripe"), dn(51), sp(60), ci(82, "solid"), dn(102), sp(113), ci(133, "extr"), dn(153), sp(162), ci(182, "green"),
  sp(200), ci(222, "apm"), dn(243),
];
const ROW2B = [
  [264, 3, <Grip />], ci(286, "stars"), [302, 59, <Combo><T w={15}>1.0</T></Combo>], [362, 30, <Hot n="snap" />], ci(416, "layers"),
  [432, 126, <Combo><T w={99} className="text-[11.5px]">Системный слой (0)</T></Combo>], sp(562), ci(582, "sketch"), sp(600), ci(620, "acheck"),
];

const MENU = [
  [19.5, 25.5, "", "Ф", "айл"], [60, 49.5, "", "Р", "едактор"], [124, 19, "", "В", "ид"], [158.5, 49.5, "Опера", "ц", "ии"], [223.5, 74.5, "С", "п", "ецификация"],
  [313, 37, "С", "е", "рвис"], [364.5, 25.5, "", "О", "кно"], [405.5, 42.5, "", "С", "правка"], [463, 60.5, "", "Б", "иблиотеки"],
];

const SIDE = [
  ["slab", 145, 1], ["curve", 167, 1], ["surf", 190, 1], ["dots", 213, 1], ["wing", 236, 1], ["compass", 259, 1], ["funnel", 282, 1], ["grid", 305, 1],
  ["book", 328, 1], ["rough", 351, 1], ["elbow", 374, 1], [null, 390], ["boss", 409], ["cutx", 439], ["sweep", 468], [null, 488], ["frame", 508],
  ["fillet", 538], ["hole", 568], ["rib", 597], ["draft", 628], ["shell", 657], ["sect", 688], ["bool", 718], ["scale", 747], ["copyb", 778],
  ["inter", 807], [null, 826], ["coll", 846], [null, 864], ["draw", 884],
];

function SideBar() {
  let p = 125;
  return (
    <div className="flex w-[34px] flex-col border-r border-[#7f848c] bg-gradient-to-r from-[#fbfcfd] via-[#f4f5f9] to-[#d6d9e4]">
      {SIDE.map(([n, y, sm], i) => {
        const h = n ? (sm ? 22 : 24) : 2;
        const m = y - h / 2 - p;
        p = y + h / 2;
        return (
          <div key={i} className="flex shrink-0 items-center" style={{ marginTop: m, height: h }}>
            {!n && <div className="ml-2 h-px w-[18px] bg-[#8f949c]" />}
            {n && sm && (
              <>
                <div className="ml-[3px] mr-[3px] h-[15px] w-[2px] bg-[repeating-linear-gradient(to_bottom,#b8bdc6_0_2px,transparent_2px_4px)]" />
                <div className={i === 0 ? "flex h-[22px] w-[22px] items-center justify-center border border-[#5a98d0] bg-[#ffe488]" : "flex h-[22px] w-[22px] items-center justify-center"}>
                  <Ico n={n} s={19} />
                </div>
              </>
            )}
            {n && !sm && (
              <div className="relative ml-1 flex">
                <Ico n={n} />
                {["boss", "frame", "fillet", "hole", "sect", "inter"].includes(n) && <svg width="4" height="4" className="absolute -bottom-px -right-0.5"><path d="M4 0V4H0z" fill="#555" /></svg>}
              </div>
            )}
          </div>
        );
      })}
      <div className="mt-[3px] flex h-3 items-center justify-end bg-gradient-to-r from-[#858a92] to-[#c9cdd2] pr-[3px]">
        <svg width="7" height="7"><path d="M.5 1V6" stroke="#000" /><path d="M3 0V7L7 3.5z" fill="#000" /></svg>
      </div>
      <div className="flex-1 bg-[#e3e6e9]" />
    </div>
  );
}

const PanelTitle = ({ w, cls, children }) => (
  <div className={"flex shrink-0 items-center bg-[#bfcad7] pl-1 pr-[6px] text-[12px] text-[#46515d] " + cls}>
    <T w={w}>{children}</T>
    <div className="flex-1" />
    <svg width="24" height="12" viewBox="0 0 24 12"><path d="M2 1.5H7M2.5 1.5V7M6 1.5V7M5.3 1.5V7M.5 7.5H8M4.5 7.5V11" stroke="#000" fill="none" /><path d="M16.5 2.5L23 9.5M23 2.5L16.5 9.5" stroke="#000" strokeWidth="1.7" /></svg>
  </div>
);

const TREE = [
  ["origin", "(т)Начало координ", 105, 1], ["sketch", "(-) Эскиз:1", 55], ["sketch", "(+) Эскиз:2", 59, 0, 1], ["plane", "Смещенная плоскость", 124], ["sketch", "Эскиз:3", 40],
  ["plane", "Смещенная плоскость", 124], ["sketch", "Эскиз:4", 40], ["plane", "Смещенная плоскость", 124], ["plane", "Смещенная плоскость", 124], ["sketch", "Эскиз:5", 40],
  ["sketch", "Эскиз:6", 40], ["plane", "Смещенная плоскость", 124], ["sketch", "(!) Эскиз:8", 53], ["spline", "Сплайн:24", 56, 1], ["spline", "Сплайн:25", 56, 1], ["plane", "Смещенная плоскость", 124],
];
const Bang = () => (
  <svg width="13" height="13" className="absolute -bottom-[2px] -right-[2px]"><circle cx="6.5" cy="6.5" r="5.2" fill="#fff" stroke="#d80000" strokeWidth="1.8" /><path d="M6.5 3V7.5M6.5 8.6V10" stroke="#000" strokeWidth="1.8" /></svg>
);

function TreePanel() {
  return (
    <div className="flex w-[203px] flex-col bg-[#dde1e6]">
      <PanelTitle w={78} cls="mr-[5px] h-[19px] pb-px">Дерево модели</PanelTitle>
      <Strip x0={244} className="mr-[3px] h-[33px] shrink-0 bg-gradient-to-b from-white to-[#dfe3ea]" items={[
        [252, 23, <Ico n="tree" s={23} />], [282, 22, <Ico n="checks" s={22} />], [310, 6, <Down c="#999" />], sp(322), [327, 30, <Hot n="page" />], [360, 23, <Ico n="pages" s={23} />],
      ]} />
      <div className="flex h-[690px] w-[199px] flex-col border border-[#8e959c] bg-[#eceef0] px-[3px] pb-[3px] pt-[2px]">
        <div className="flex h-[481px] shrink-0 flex-col border border-[#8e959c] bg-white">
          <div className="flex h-[462px]">
            <div className="w-[172px] shrink-0 overflow-hidden text-[12px] text-black">
              <div className="flex h-[29px] items-center pl-[6px]">
                <div className="relative"><Ico n="detail" /><Bang /></div>
                <T w={80} className="ml-[7px]">Деталь (Тел-0)</T>
              </div>
              {TREE.map(([ic, t, w, plus, bang], i) => (
                <div key={i} className="ml-[18px] flex h-7 items-center border-l border-dotted border-[#888]">
                  {plus ? (
                    <svg width="17" height="9" className="-ml-[5px] shrink-0"><path d="M.5 .5H8.5V8.5H.5z" fill="#fff" stroke="#8898b0" /><path d="M2 4.5H7M4.5 2V7" stroke="#203060" /><path d="M9 4.5H17" stroke="#888" strokeDasharray="1 1" /></svg>
                  ) : (
                    <div className="w-3 shrink-0 border-t border-dotted border-[#888]" />
                  )}
                  <div className="w-[5px] shrink-0 border-t border-dotted border-[#888]" />
                  <div className="relative shrink-0"><Ico n={ic} />{bang && <Bang />}</div>
                  <T w={w} className="ml-2">{t}</T>
                </div>
              ))}
            </div>
            <div className="flex w-[17px] flex-col items-center bg-[#ededed]">
              <div className="flex h-[19px] rotate-180 items-center"><Down c="#444" /></div>
              <div className="flex h-[205px] w-[15px] flex-col items-center justify-center gap-[2px] rounded-[2px] border border-[#8c8c8c] bg-gradient-to-r from-[#f2f2f2] to-[#c9c9c9]">
                <i className="h-px w-[6px] bg-[#444]" /><i className="h-px w-[6px] bg-[#444]" /><i className="h-px w-[6px] bg-[#444]" />
              </div>
              <div className="flex-1" />
              <div className="pb-[7px]"><Down c="#444" /></div>
            </div>
          </div>
          <div className="flex h-[17px] items-center bg-[#ededed]">
            <div className="flex w-[19px] rotate-90 justify-center"><Down c="#222" /></div>
            <div className="flex h-[15px] w-[97px] items-center justify-center gap-[2px] rounded-[2px] border border-[#8c8c8c] bg-gradient-to-b from-[#f2f2f2] to-[#c9c9c9]">
              <i className="h-[6px] w-px bg-[#444]" /><i className="h-[6px] w-px bg-[#444]" /><i className="h-[6px] w-px bg-[#444]" />
            </div>
            <div className="flex-1" />
            <div className="mr-[22px] -rotate-90"><Down c="#222" /></div>
          </div>
        </div>
        <div className="mt-[2px] flex-1 border border-[#8e959c] bg-[#efefef]" />
      </div>
      <div className="flex h-4 items-center text-[11.5px] text-[#30363c]">
        <div className="ml-[3px] flex h-4 w-[69px] items-center justify-center rounded-b-[3px] border border-t-0 border-[#a8adb3] bg-white pt-px"><T w={60}>Построение</T></div>
        <T w={60} className="ml-2 pt-[2px]">Исполнения</T>
      </div>
    </div>
  );
}

function ModelView() {
  const inner = "M656 150L655 190L653 213L629 288L600 364L580 420Q562 457 540 495Q516 530 493 553L449 578";
  const edge = "V578L493 553Q516 530 540 495Q562 457 580 420L600 364L629 288L653 213L655 190L656 150z";
  const outer = "M724 150Q725 190 718 213L693 288L673 347Q655 396 633 443Q618 477 600 507Q580 542 557 570Q535 594 507 613Q480 634 449 649";
  return (
    <svg width="767" height="758" viewBox="449 151 767 758">
      <defs>
        <linearGradient id="sea" x1="0" y1="0" x2="1" y2="0"><stop offset="0" stopColor="#00b2ff" /><stop offset=".4" stopColor="#00aaff" /><stop offset="1" stopColor="#0090ff" /></linearGradient>
        <linearGradient id="deep" x1=".25" y1=".2" x2="1" y2="1"><stop offset="0" stopColor="#0078ff" stopOpacity="0" /><stop offset=".5" stopColor="#0078ff" stopOpacity=".3" /><stop offset="1" stopColor="#0074ff" stopOpacity=".8" /></linearGradient>
        <filter id="soft" x="-20%" y="-20%" width="140%" height="140%"><feGaussianBlur stdDeviation="10" /></filter>
        <clipPath id="band"><path d={outer + edge} /></clipPath>
      </defs>
      <rect x="449" y="151" width="767" height="758" fill="url(#sea)" />
      <rect x="449" y="151" width="767" height="758" fill="url(#deep)" />
      <g clipPath="url(#band)">
        <path d={outer + edge} fill="#00aaff" />
        <path d="M709 120Q712 180 696 217L667 285L632 375Q616 420 592 467Q572 508 544 543Q509 585 430 625" fill="none" stroke="#00e0ff" strokeWidth="34" filter="url(#soft)" />
      </g>
      <path d={inner + "V150z"} fill="#c0c0c0" />
      <path d="M660 151Q662 185 653 213M629 288Q603 370 580 420M565 452L540 495M493 553Q475 570 449 584" fill="none" stroke="#001030" />
      <path d={inner} fill="none" stroke="#000" />
      <path d="M654 213Q660 207 675 207Q695 208 718 214" fill="none" stroke="#001030" />
      <path d={outer} fill="none" stroke="#fff" strokeWidth="1.2" />
      <path d={outer} fill="none" stroke="#002040" strokeWidth="1.4" strokeDasharray="2 2" />
      <path d="M449 288.5H629" stroke="#e020d8" />
      <path d="M629 288.5H1216" stroke="#6838f0" strokeWidth="1.2" />
      <path d="M449 696.5H1216" stroke="#7838f0" strokeWidth="1.2" />
      <path d="M468 865.5L495 865" stroke="#104060" />
      <path d="M495 865V884" stroke="#00e000" strokeWidth="4" />
      <path d="M491.5 883H498.500L495 894z" fill="#00c020" />
      <path d="M492 862H498V866z" fill="#a01030" />
      <text x="492" y="906" fontSize="10" fill="#00e090" fontFamily="Liberation Sans, sans-serif">Y</text>
    </svg>
  );
}

function OldApp() {
  return (
    <div className="flex h-[1008px] flex-col bg-white pl-[3px] font-['DejaVu_Sans_Condensed','Noto_Sans',sans-serif]">
      <div className="flex h-6 shrink-0 items-start justify-between border-b border-t border-b-[#101010] border-t-[#b8bdb8] bg-[linear-gradient(to_right,#8a8a8a_0px,#8c8c8c_230px,#6a6a6a_280px,#262626_315px,#1d1d1d_390px,#4a4a4a_410px,#404040_440px,#242424_460px,#484848_490px,#303030_520px,#404040_565px,#1c1c1c_590px,#2e2e2e_740px,#191919_800px,#202020_1050px,#555_1110px)]">
        <div className="flex items-center pt-[4px]">
          <div className="flex h-[15px] w-[15px] items-center justify-center rounded-full bg-[radial-gradient(#50b8f0,#1068b0)] text-[10px] font-bold leading-none text-white">K</div>
          <T w={260} className="ml-[6px] font-['Open_Sans'] text-[12.500px] leading-4 text-black [text-shadow:0_0_4px_#ddd]">КОМПАС-3D V14 (x64) - канистра-по сечениям</T>
        </div>
        <div className="mr-[2px] flex h-[19px] w-[103px] overflow-hidden rounded-b-[4px] border border-t-0 border-[#d5d5d5]">
          <div className="flex w-[28px] items-center justify-center border-r border-[#ccc] bg-gradient-to-b from-[#a5a5a5] via-[#555] to-[#707070]"><div className="mt-1 h-[4px] w-[11px] bg-white" /></div>
          <div className="flex w-[27px] items-center justify-center border-r border-[#ccc] bg-gradient-to-b from-[#a5a5a5] via-[#555] to-[#707070]"><svg width="12" height="11"><path d="M3.500 3V1H11V7H9M1.500 3.500H8.500V9.500H1.500z" stroke="#fff" fill="none" strokeWidth="1.700" /></svg></div>
          <div className="flex flex-1 items-center justify-center bg-gradient-to-b from-[#e09080] via-[#b83018] to-[#d04828]"><svg width="11" height="9"><path d="M1.500 .5L9.500 8.500M9.500 .5L1.500 8.500" stroke="#fff" strokeWidth="2.500" /></svg></div>
        </div>
      </div>
      <Strip x0={3} className="h-8 shrink-0 bg-[#e4e7ea] text-[12px] text-[#3c4248]" items={[[7, 3, <Grip />], ...MENU.map(([x, w, a, u, b]) => [x, w, <T w={w} className="pt-px">{a}<span className="underline underline-offset-2">{u}</span>{b}</T>])]} />
      <div className="flex h-[34px] shrink-0 bg-[#e4e7ea]">
        <Strip x0={3} items={ROW1A} className="h-[34px] w-[587px] border-b border-[#85898f] bg-gradient-to-b from-white via-[#fdfdfe] to-[#dcdfe8]" />
        <Cap />
        <Strip x0={601} items={ROW1B} className="ml-px h-[34px] w-[561px] border-b border-[#85898f] bg-gradient-to-b from-white via-[#fdfdfe] to-[#dcdfe8]" />
        <Cap />
      </div>
      <div className="flex h-[34px] shrink-0 bg-[#e4e7ea]">
        <Strip x0={3} items={ROW2A} className="h-[34px] w-[247px] border-b border-[#85898f] bg-gradient-to-b from-white via-[#fdfdfe] to-[#dcdfe8]" />
        <Cap />
        <Strip x0={260} items={ROW2B} className="h-[34px] w-[378px] border-b border-[#85898f] bg-gradient-to-b from-white via-[#fdfdfe] to-[#dcdfe8]" />
        <Cap />
      </div>
      <div className="flex h-[865px] shrink-0 border-t border-[#85898f] bg-[#e3e6e9]">
        <SideBar />
        <div className="mr-[3px] flex w-[200px] flex-col bg-white">
          <PanelTitle w={48} cls="h-5 pb-[3px]">Свойства</PanelTitle>
          <div className="flex h-[21px] shrink-0 items-center justify-between rounded-[3px] border border-[#707070] bg-gradient-to-b from-[#f4f4f4] to-[#cfcfcf] px-[3px] pr-1 text-[12.500px] text-black"><T w={19}>Нет</T><Down s={8} /></div>
          <Strip x0={37} className="h-[31px] shrink-0 bg-gradient-to-b from-white to-[#dfe3ea]" items={[[42, 26, <Ico n="cat" />], [71, 24, <Ico n="az" />], sp(102), [109, 24, <Ico n="bolt" />], sp(140), [148, 24, <Ico n="help" />]]} />
          <div className="flex flex-1"><div className="w-[101px] border-r border-[#9b9b9b]" /></div>
        </div>
        <div className="flex flex-1 flex-col">
          <div className="flex h-6 shrink-0 bg-gradient-to-b from-[#e2e6eb] to-white">
            <svg width="24" height="23" className="shrink-0"><path d="M1 23L20 4Q22 2 24 2V23z" fill="#f2f6fe" /><path d="M1 23L20 4Q22 1.500 24 1.500" stroke="#70757c" fill="none" /></svg>
            <div className="mt-px flex h-[22px] w-[190px] items-center rounded-tr-[4px] border-r border-t border-[#70757c] bg-gradient-to-b from-[#dff3fb] via-[#e8efff] to-[#c3d0f5] pl-1">
              <Ico n="docpart" s={15} />
              <T w={131} className="ml-3 text-[11.500px] font-bold text-[#111]">канистра-по сечениям</T>
              <svg width="9" height="9" className="ml-[13px]"><path d="M1 1L8 8M8 1L1 8" stroke="#000" strokeWidth="1.700" /></svg>
            </div>
            <div className="flex flex-1 items-center justify-end pr-[6px]"><Down s={10} /></div>
          </div>
          <div className="flex h-[761px] shrink-0 border-t border-[#a0a5ab]">
            <div className="w-[4px] border-l border-[#8a95b0] bg-[#cfd9f0]" />
            <TreePanel />
            <div className="ml-px border-l border-t border-[#606468]"><ModelView /></div>
            <div className="flex-1 bg-[#e8ebf0]" />
          </div>
          <div className="mt-[3px] flex h-[74px] border-t border-[#9a9fa6] pt-[7px]">
            <div className="ml-[3px] h-[60px] w-[2px] bg-[repeating-linear-gradient(to_bottom,#a8aeb8_0_2px,transparent_2px_5px)]" />
            <div className="ml-[2px] h-[43px] w-[968px] border border-[#85898f] bg-gradient-to-b from-[#f4f4f4] via-white to-white" />
          </div>
        </div>
      </div>
      <div className="flex h-[19px] shrink-0 items-center border-t border-[#85898f] bg-gradient-to-b from-[#e8ebee] to-[#c6cbd0] pl-[5px] text-[12px] text-[#30363c]">
        <T w={535} className="pt-[2px]">Щелкните левой кнопкой мыши на объекте для его выделения (вместе с Ctrl - добавить к выделенным)</T>
        <div className="ml-[591px] h-[14px] w-px bg-[#70757c]" />
      </div>
    </div>
  );
}

/* ---------- dark application ---------- */

const DMENU = [
  [22.5, 12.5, "Fajl"], [44, 25.5, "Pravka"], [78, 29, "Vydelit'"], [117, 12, "Vid"], [138, 19, "Eskiz"], [165.5, 56.5, "Modelirovanie"], [230.5, 44.500, "Oformlenie"],
  [284, 46, "Diagnostika"], [338.5, 42, "Upravlenie"], [389.5, 36.500, "Nastrojka"], [435, 36, "Prilojenia"], [479.500, 21.500, "Okno"], [509.500, 31, "Spravka"],
];

const Cmd = ({ n, lines, w, dim, on, gap = "gap-[3px]", corner }) => (
  <div className={"flex h-[18.3px] items-center pl-[2px] " + gap + (on ? " bg-black text-white" : dim ? " text-[#858585]" : " text-[#cdcdcd]")}>
    <div className="relative">
      <DI n={n} s={14} c={dim ? "text-[#858585]" : on ? "text-white" : "text-[#cfcfcf]"} />
      {corner && <svg width="4" height="4" className="absolute -bottom-px -right-[2px]"><path d="M4 0V4H0z" fill="#fff" /></svg>}
    </div>
    <div className="flex flex-col items-start leading-[8px]">
      {lines.map((l, i) => <T key={i} w={w[i]} className="leading-[8px]">{l}</T>)}
    </div>
  </div>
);

const Group = ({ cls, title, tw, arrow, children, nogrip, chevron }) => (
  <div className={"flex shrink-0 flex-col border-r border-[#1e1e1e] " + cls}>
    <div className="flex h-[55px]">{children}</div>
    <div className="flex h-[12px] items-center bg-[#353535] pl-1 pr-[2px] text-[7.800px] text-[#c0c0c0]">
      <div className="flex flex-1 justify-center">{chevron ? <svg width="7" height="6"><path d="M.5 0L3.500 2L6.500 0M.5 3L3.500 5L6.500 3" stroke="#aaa" fill="none" /></svg> : <T w={tw} className="pt-[3px]">{title}</T>}</div>
      {arrow && <Down c="#d0d0d0" s={5} />}
      {!nogrip && <div className="ml-[7px] h-[7px] w-[3px] border-x border-dotted border-[#999]" />}
    </div>
  </div>
);
const Col = ({ c, children }) => <div className={"flex flex-col " + c}>{children}</div>;
const IconGrid = ({ rows, dimLast }) => (
  <div className="flex flex-col">
    {rows.map((r, i) => (
      <div key={i} className="flex h-[18.3px] items-center">
        {r.map((n, j) => <div key={j} className="flex w-[19.300px] justify-center"><DI n={n} s={14} c={dimLast && i === 2 ? "text-[#777]" : "text-[#cfcfcf]"} /></div>)}
      </div>
    ))}
  </div>
);

function Ribbon() {
  return (
    <div className="flex h-[67px] shrink-0 bg-[#474747] text-[9px]">
      <Group cls="w-[88px]" chevron nogrip>
        <Col c="w-full">
          <Cmd on n="cubeS" lines={["Tverdotel'noe", "modelirovanie"]} w={[54, 56]} gap="gap-[2px]" />
          <Cmd n="diam" lines={["Karkas i", "poverhnosti"]} w={[30, 46]} gap="gap-[2px]" />
          <Cmd n="skt" lines={["Instrumenty", "eskiza"]} w={[47, 23]} gap="gap-[2px]" />
        </Col>
      </Group>
      <Group cls="w-[58px]" title="Sistemnaa" tw={32}><IconGrid dimLast rows={[["newd", "opend", "saved"], ["printd", "prevd", "savep"], ["undod", "redod"]]} /></Group>
      <Group cls="w-[89px]" title="Eskiz" tw={15} arrow>
        <Col c="pl-px"><Cmd n="auto" lines={["Avtolinia"]} w={[34]} /><Cmd corner n="circle" lines={["Okrujnost'"]} w={[40]} /><Cmd corner n="rect" lines={["Pramougol'nik"]} w={[56]} /></Col>
      </Group>
      <Group cls="w-[352px]" title="Elementy tela" tw={43} arrow>
        <Col c="w-[88px]"><Cmd corner n="ext" lines={["Element", "vydavlivania"]} w={[32, 47]} gap="gap-[2px]" /><Cmd corner n="cutd" lines={["Vyrezat'", "vydavlivaniem"]} w={[31, 55]} gap="gap-[2px]" /><Cmd corner n="fil" lines={["Skruglenie"]} w={[41]} gap="gap-[2px]" /></Col>
        <Col c="w-[88px]"><Cmd n="thick" lines={["Pridat' tolsinu"]} w={[53]} /><Cmd corner n="hold" lines={["Otverstie", "prostoe"]} w={[35, 29]} /><Cmd n="full" lines={["Polnoe", "skruglenie"]} w={[27, 41]} /></Col>
        <Col c="w-[88px]"><Cmd n="ribd" lines={["Rebro jestkosti"]} w={[57]} /><Cmd n="sec" lines={["Secenie"]} w={[30]} /><Cmd n="ukl" lines={["Uklon"]} w={[23]} /></Col>
        <Col c="w-[86px]"><Cmd n="addd" lines={["Dobavit' detal'-", "zagotovku..."]} w={[59, 46]} /><Cmd n="shelld" lines={["Obolocka"]} w={[37]} /><Cmd n="boold" lines={["Buleva operazia"]} w={[62]} /></Col>
      </Group>
      <Group cls="w-[89px]" title="Elementy karkasa" tw={55} arrow>
        <Col c="pl-px"><Cmd corner n="dot" lines={["Tocka po", "koordinatam"]} w={[35, 50]} gap="gap-[2px]" /><Cmd n="kont" lines={["Kontur"]} w={[26]} gap="gap-[2px]" /><Cmd corner n="spir" lines={["Spiral'", "zilindriceskaa"]} w={[24, 52]} gap="gap-[2px]" /></Col>
      </Group>
      <Group cls="w-[89px]" title="Massiv, kopirovanie" tw={63}>
        <Col c="pl-px"><Cmd corner n="grd" lines={["Massiv po setke"]} w={[62]} /><Cmd n="cpy" lines={["Kopirovat'", "ob'ekty"]} w={[39, 29]} /><Cmd n="colg" lines={["Kollekzia", "geometrii"]} w={[34, 37]} /></Col>
      </Group>
      <Group cls="w-[39px]" title="Vspo..." tw={21}><IconGrid rows={[["pl", "net"], ["pls", "camd"], ["lin"]]} /></Group>
      <Group cls="w-[39px]" title="Razme..." tw={27}><IconGrid rows={[["dimd", "disk"], ["dim2", "disk"], ["lst", "clip"]]} /></Group>
      <Group cls="w-[58px]" title="Oboznacenia" tw={42}><IconGrid rows={[["pill", "bar", "slp"], ["slp2", "slp3", "slp4"], ["slp5", "slp6"]]} /></Group>
      <Group cls="w-[89px]" title="Diagnostika" tw={38} arrow>
        <Col c=""><Cmd n="inf" lines={["Informazia ob", "ob'ekte"]} w={[54, 29]} /><Cmd corner n="ang" lines={["Rasstoanie i ugol"]} w={[66]} /><Cmd n="mzg" lines={["MZG modeli"]} w={[48]} /></Col>
      </Group>
      <Group cls="w-[89px]" title="Certej" tw={19}>
        <Col c=""><Cmd dim n="cer" lines={["Sozdat' certej po", "modeli"]} w={[66, 27]} /><Cmd dim n="cer2" lines={["Upravlenie", "svazannymi cer..."]} w={[42, 66]} /></Col>
      </Group>
      <div className="flex flex-1 flex-col justify-end"><div className="h-[12px] bg-[#353535]" /></div>
    </div>
  );
}

const di = (x, n, c) => [x - 7, 14, <DI n={n} s={14} c={c} />];
const dd = (x) => [x - 3, 6, <Down c="#e0e0e0" s={6} />];
const blk = (x, w, node) => [x, w, <div className="flex h-[19px] w-full items-center justify-around bg-black text-white">{node}</div>];
const VIEWBAR = [
  [524, 12, <div className="h-[19px] w-full bg-[#2b2b2b] px-[2px] pt-1"><div className="h-[3px] w-[8px] border-y border-dotted border-[#aaa]" /></div>],
  di(547, "skt"), [557, 1, <div className="h-[19px] w-px bg-[#222]" />], di(568, "zoomd"), dd(586), di(603, "pln"), di(623, "axd"), dd(640),
  blk(650, 19, <DI n="cubeF" s={14} c="text-white" />), di(679, "cubeW"), dd(697), [705, 1, <div className="h-[19px] w-px bg-[#222]" />], di(716, "eyex"), dd(733),
  di(751, "pic"), dd(768), blk(778, 19, <DI n="pts" s={14} c="text-white" />), di(808, "boxes"), blk(818, 19, <DI n="pages" s={14} c="text-white" />), di(847, "tri"),
  blk(859, 34, <><DI n="funl" s={14} c="text-white" /><Down c="#fff" s={6} /></>), di(905, "door"), di(925, "pick", "text-[#888]"),
];

function DarkApp() {
  return (
    <div className="flex h-[686px] flex-col border-t-2 border-[#111] bg-[#474747] font-['Open_Sans','Noto_Sans',sans-serif]">
      <div className="flex h-[19px] shrink-0 border-b border-[#151515] bg-[#333] text-[8.800px] text-[#e6e6e6]">
        <div className="flex h-[17px] w-4 items-center justify-center border border-[#206080] bg-[#123648]"><svg width="13" height="13" viewBox="0 0 16 16"><path d={circ(8, 8, 6.5) + "M5 4V12M5 8L10 4M5 8L11 12"} stroke="#30a0d0" fill="none" strokeWidth="1.500" /></svg></div>
        <Strip x0={16} className="h-[18px] pt-px" items={DMENU.map(([x, w, t]) => [x, w, <T w={w}>{t}</T>])} />
        <Strip x0={540.5} className="h-[18px]" items={[
          [971, 13, <DI n="rectw" s={13} />], [990, 13, <DI n="gearw" s={13} />],
          [1010, 140, <div className="flex h-[16px] w-full items-center gap-[3px] border border-[#9a9a9a] bg-[#565656] pl-1 text-[9px] text-[#a8a8a8]"><DI n="mag" s={11} /><T w={107} className="pt-px">Poisk po komandam (Alt+/)</T></div>],
          [1160, 10, <div className="mt-1 h-[2px] w-[9px] bg-white" />],
          [1182, 11, <svg width="11" height="9"><path d="M3 3V1H10V6H8M1 3.500H8V8H1z" stroke="#eee" fill="none" strokeWidth="1.300" /></svg>],
          [1206, 8, <svg width="8" height="8"><path d="M1 1L7 7M7 1L1 7" stroke="#fff" strokeWidth="1.700" /></svg>],
        ]} />
      </div>
      <div className="flex h-[15px] shrink-0 text-[9px] text-white">
        <div className="flex w-[34px] items-center justify-between bg-[#3a3a3a] pl-1 pr-[5px]"><DI n="home" s={11} /><Down c="#ccc" s={5} /></div>
        <div className="flex w-[123px] items-center bg-black pl-[3px]"><DI n="det" s={13} c="text-white" /><T w={70} className="ml-[3px] pt-[3px] text-[#e0e0e0]">Detal' BEZ IMENI1</T><svg width="7" height="7" className="ml-[23px] mt-px"><path d="M1 1L6 6M6 1L1 6" stroke="#fff" strokeWidth="1.300" /></svg></div>
      </div>
      <div className="h-[4px] shrink-0 bg-black" />
      <Ribbon />
      <div className="flex h-[579px] shrink-0 border-t border-[#1c1c1c]">
        <div className="flex w-[18px] flex-col items-center bg-[#333]">
          <div className="flex h-[18px] w-full items-center justify-center bg-black"><DI n="treed" c="text-white" /></div>
          <div className="flex h-[18px] w-full items-center justify-center bg-[#474747]"><DI n="table" /></div>
          <div className="flex h-[18px] w-full items-center justify-center bg-[#474747] font-['Liberation_Serif'] text-[13px] italic text-[#ddd]">f<sub className="text-[9px]">x</sub></div>
          <div className="flex h-[19px] w-full items-center justify-center bg-[#474747]"><DI n="lines" s={12} /></div>
        </div>
        <div className="flex w-[221px] flex-col border-x border-[#111] bg-[#484848] text-[9px] text-[#c4c4c4]">
          <div className="flex h-[13px] items-center justify-between bg-[#353535] pl-[2px] pr-[2px]">
            <T w={26}>Derevo</T>
            <svg width="10" height="10" viewBox="0 0 10 10"><circle cx="5" cy="5" r="3" stroke="#e8e8e8" strokeWidth="1.500" fill="none" /><circle cx="5" cy="5" r="4.300" stroke="#e8e8e8" strokeWidth="1.200" strokeDasharray="1.700 1.680" fill="none" /></svg>
          </div>
          <div className="flex h-[20px] items-center border-b border-t border-[#151515]">
            <div className="flex h-full w-[18px] items-center justify-center bg-black"><DI n="treed" c="text-white" /></div>
            <div className="ml-[3px]"><DI n="treed2" /></div><div className="ml-[6px]"><DI n="stack" /></div><div className="ml-[6px]"><DI n="dsh" /></div>
          </div>
          <div className="flex h-[19px] items-center border-b border-[#151515]">
            <div className="flex w-[19px] justify-center"><DI n="funl" /></div>
            <div className="flex h-full flex-1 items-center bg-[#666] pl-1"><DI n="mag" s={12} /></div>
          </div>
          <div className="flex h-[20px] items-center border-b border-[#333]">
            <div className="h-full w-[37px] bg-[#3c3c3c]" />
            <div className="ml-[11px] flex items-center gap-[3px]"><Down c="#eee" s={5} /><DI n="det" s={13} c="text-white" /></div><T w={50} className="pt-[2px]">Detal' (Tel-0)</T>
          </div>
          <div className="flex h-[19px] items-center">
            <div className="flex h-full w-[37px] items-center bg-[#3c3c3c] pl-[4px]"><DI n="eye" s={11} c="text-white" /></div>
            <div className="ml-[19px] -rotate-90"><Down c="#eee" s={4} /></div>
            <svg width="13" height="11" className="ml-[3px]"><path d="M5.500 0V8H13M5.500 8L.5 11" stroke="#bbb" fill="none" /></svg>
            <div className="ml-[3px] mt-px h-[5px] w-[5px] rounded-full bg-[#eee]" />
            <T w={67} className="ml-[3px] pt-[2px]">Nacalo koordinat</T>
          </div>
          <div className="h-[4px] bg-[#b65a92]" />
          <div className="h-[344px]" />
          <div className="flex h-[22px] items-center border-b border-t border-[#151515]">
            <div className="flex h-[18px] w-[18px] items-center justify-center bg-black"><DI n="treed" c="text-white" /></div>
            <div className="ml-[4px]"><DI n="table" /></div>
          </div>
        </div>
        <div className="relative flex-1 bg-gradient-to-b from-[#4a4a4a] via-[#404040] to-[#303030]">
          <svg width="981" height="578" viewBox="239 1116 981 578" className="absolute inset-0" fill="none">
            <path d="M596 1344L820.500 1315.500V1542L596 1570z" stroke="#668f2a" />
            <path d="M553.500 1420L779 1391.500L863 1466L640 1494z" stroke="#27628c" />
            <path d="M666.500 1293L750.500 1367V1593L666.500 1519z" stroke="#9c6464" />
            <path d="M708.500 1443V1417" stroke="#2a78b0" /><path d="M708.500 1443L682 1447" stroke="#b07070" /><path d="M708.500 1443L717 1450" stroke="#70a030" />
            <path d="M266 1668V1640" stroke="#4068b8" strokeWidth="2.500" /><path d="M263.500 1643L266 1632L268.500 1643z" fill="#78b0e8" />
            <path d="M266 1670L239 1673" stroke="#d03838" strokeWidth="2.500" />
            <path d="M266 1670L275 1677" stroke="#208028" strokeWidth="2" /><path d="M272 1678L277 1674L283 1683z" fill="#20a030" />
            <circle cx="266" cy="1670" r="5" fill="#c8b830" />
          </svg>
          <div className="relative ml-[285px] w-[412px] border-b border-r border-[#222] bg-[#404040]"><Strip x0={524} items={VIEWBAR} className="h-[18px]" /></div>
        </div>
      </div>
    </div>
  );
}

export default function App() {
  return (
    <div className="h-[1694px] w-[1220px] overflow-hidden">
      <OldApp />
      <DarkApp />
    </div>
  );
}
